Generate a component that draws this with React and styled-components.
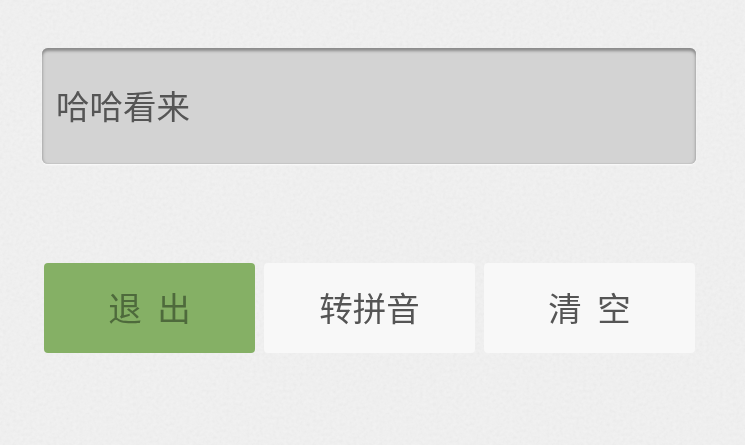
import React from 'react'
import styled, { createGlobalStyle } from 'styled-components'

const noise = encodeURIComponent(
  `<svg xmlns="http://www.w3.org/2000/svg" width="300" height="300"><filter id="n"><feTurbulence type="fractalNoise" baseFrequency="0.3" numOctaves="3" stitchTiles="stitch"/><feColorMatrix type="saturate" values="0"/><feComponentTransfer><feFuncA type="linear" slope="0" intercept="1"/></feComponentTransfer></filter><rect width="300" height="300" filter="url(#n)" opacity="0.07"/></svg>`
)

const GlobalStyle = createGlobalStyle`
  html, body {
    margin: 0;
    padding: 0;
    background: #efefef;
  }
  body {
    font-family: "Liberation Sans", "Noto Sans CJK SC", sans-serif;
  }
`

const Page = styled.div`
  box-sizing: border-box;
  width: 745px;
  height: 445px;
  padding: 48px 49px 0 42px;
  background-color: #f2f2f2;
  background-image: url("data:image/svg+xml,${noise}");
  overflow: hidden;
  filter: blur(0.5px);
`

const InputBox = styled.div`
  box-sizing: border-box;
  height: 116px;
  display: flex;
  align-items: center;
  padding: 3px 14px 0;
  background: #d3d3d3;
  border-radius: 6px;
  box-shadow: inset 0 4px 3px -1px #8a8a8a, inset 3px 0 3px -2px #b0b0b0, inset -3px 0 3px -2px #b0b0b0,
    inset 0 -1px 1px #c8c8c8, 0 1px 2px #fbfbfb;
  color: #555;
  font-size: 33.5px;
  line-height: 1;
`

const ButtonRow = styled.div`
  display: flex;
  gap: 9px;
  margin: 99px 1px 0 2px;
`

const Button = styled.button`
  flex: 1;
  height: 90px;
  padding: 0 0 4px;
  border: 0;
  border-radius: 4px;
  background: ${props => (props.$primary ? '#85b065' : '#f8f8f8')};
  color: ${props => (props.$primary ? '#4e6a3c' : '#555')};
  font-family: "Noto Sans CJK SC", sans-serif;
  font-size: 33.5px;
  word-spacing: 8px;
  white-space: pre;
`

export default function App() {
  return (
    <>
      <GlobalStyle />
      <Page>
        <InputBox>哈哈看来</InputBox>
        <ButtonRow>
          <Button $primary>退 出</Button>
          <Button>转拼音</Button>
          <Button>清 空</Button>
        </ButtonRow>
      </Page>
    </>
  )
}
